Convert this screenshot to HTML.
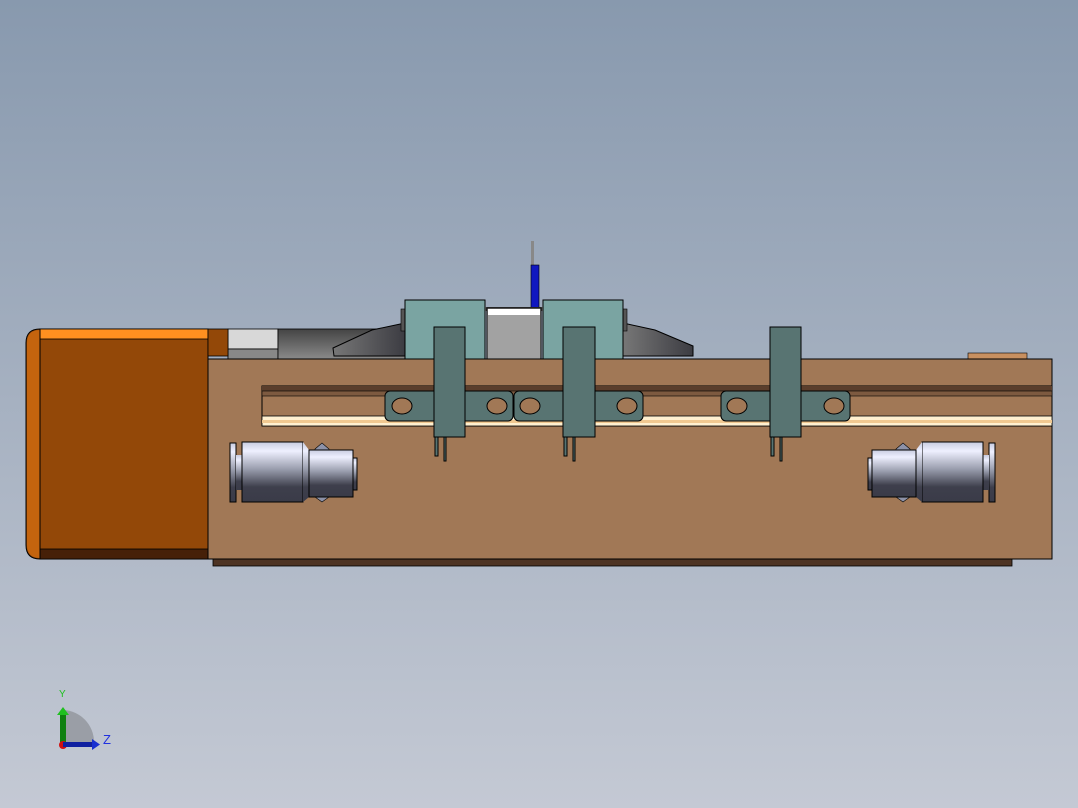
<!DOCTYPE html>
<html><head><style>
html,body{margin:0;padding:0;width:1078px;height:808px;overflow:hidden}
body{background:linear-gradient(#8899ae,#c4c9d4);font-family:"Liberation Sans",sans-serif}
svg{display:block}
</style></head><body>
<svg width="1078" height="808" viewBox="0 0 1078 808" xmlns="http://www.w3.org/2000/svg">
<defs>
<linearGradient id="cyl" x1="0" y1="0" x2="0" y2="1">
<stop offset="0" stop-color="#c8cce0"/><stop offset="0.15" stop-color="#eef0ff"/><stop offset="0.45" stop-color="#9a9eae"/><stop offset="0.75" stop-color="#3e3f4c"/><stop offset="1" stop-color="#3a3b48"/>
</linearGradient>
<linearGradient id="dk" x1="0" y1="0" x2="0" y2="1">
<stop offset="0" stop-color="#444"/><stop offset="1" stop-color="#8a8a8a"/>
</linearGradient>
<linearGradient id="wg" x1="0" y1="0" x2="1" y2="0">
<stop offset="0" stop-color="#777"/><stop offset="1" stop-color="#3c3c42"/>
</linearGradient>
<g id="cylL" stroke="#000" stroke-width="1">
<rect x="230" y="443" width="6" height="59" fill="url(#cyl)"/>
<rect x="236" y="455" width="6" height="35" fill="url(#cyl)" stroke="none"/>
<polygon points="315,449 322,443 329,449 329,497 322,502 315,497" fill="#8d92a8" stroke-width="0.6"/>
<rect x="242" y="442" width="61" height="60" fill="url(#cyl)"/>
<polygon points="303,442 309,450 309,497 303,502" fill="url(#cyl)" stroke="none"/>
<rect x="309" y="450" width="44" height="47" fill="url(#cyl)"/>
<rect x="353" y="458" width="4" height="32" fill="url(#cyl)"/>
</g>
</defs>
<!-- top back parts -->
<rect x="968" y="353" width="59" height="6" fill="#c89060" stroke="#000" stroke-width="0.6"/>
<rect x="228" y="353" width="40" height="6" fill="#c89060" stroke="#000" stroke-width="0.6"/>
<rect x="228" y="329" width="50" height="20" fill="#d8d8d8" stroke="#000" stroke-width="0.8"/>
<rect x="228" y="349" width="50" height="10" fill="#888" stroke="#000" stroke-width="0.8"/>
<rect x="278" y="329" width="128" height="30" fill="url(#dk)" stroke="#000" stroke-width="0.8"/>
<!-- wings -->
<polygon points="333,348 372,330 405,323 405,356 334,356" fill="url(#wg)" stroke="#000"/>
<polygon points="623,323 655,330 693,346 693,356 623,356" fill="url(#wg)" stroke="#000"/>
<rect x="401" y="309" width="5" height="22" fill="#555" stroke="#000" stroke-width="0.6"/>
<rect x="622" y="309" width="5" height="22" fill="#555" stroke="#000" stroke-width="0.6"/>
<!-- carriage -->
<rect x="531" y="241" width="3" height="24" fill="#888"/>
<rect x="531" y="265" width="8" height="45" fill="#1018c0" stroke="#000" stroke-width="0.6"/>
<rect x="405" y="300" width="80" height="59" fill="#7aa4a2" stroke="#000"/>
<rect x="543" y="300" width="80" height="59" fill="#7aa4a2" stroke="#000"/>
<rect x="485" y="307" width="58" height="4" fill="#444"/>
<path d="M487 308 H541 V360 Q541 363 537 363 H491 Q487 363 487 360 Z" fill="#a2a2a2" stroke="#000"/>
<rect x="488" y="309" width="52" height="6" fill="#fff"/>
<!-- orange block -->
<path d="M40 329 H208 V559 H40 Q26 559 26 545 V343 Q26 329 40 329 Z" fill="#934808" stroke="#000"/>
<path d="M40 330 Q27 330 27 343 V545 Q27 558 40 558 Z" fill="#c4640e"/>
<rect x="40" y="329" width="168" height="10" fill="#ff9020" stroke="#000" stroke-width="0.8"/>
<rect x="40" y="549" width="168" height="10" fill="#462008" stroke="#000" stroke-width="0.8"/>
<line x1="40" y1="329" x2="40" y2="559" stroke="#000"/>
<rect x="208" y="329" width="20" height="27" fill="#934808" stroke="#000" stroke-width="0.8"/>
<!-- body -->
<rect x="213" y="559" width="799" height="7" fill="#4e3424" stroke="#000" stroke-width="0.8"/>
<rect x="208" y="359" width="844" height="200" fill="#a17856" stroke="#000"/>
<!-- rail -->
<rect x="262" y="386" width="790" height="40" fill="#a17856" stroke="#000"/>
<rect x="262" y="386" width="790" height="5" fill="#5a3e2c"/>
<rect x="262" y="391" width="790" height="5" fill="#7d5a40" stroke="#000" stroke-width="0.6"/>
<rect x="262" y="416" width="790" height="10" fill="#fff0d0" stroke="#000" stroke-width="0.8"/>
<rect x="262" y="420" width="790" height="3" fill="#f0c890"/>
<!-- brackets -->
<g fill="#587472" stroke="#000">
<rect x="385" y="391" width="128" height="30" rx="5"/>
<rect x="514" y="391" width="129" height="30" rx="5"/>
<rect x="721" y="391" width="129" height="30" rx="5"/>
</g>
<g fill="#a17856" stroke="#000">
<ellipse cx="402" cy="406" rx="10" ry="8"/><ellipse cx="497" cy="406" rx="10" ry="8"/>
<ellipse cx="530" cy="406" rx="10" ry="8"/><ellipse cx="627" cy="406" rx="10" ry="8"/>
<ellipse cx="737" cy="406" rx="10" ry="8"/><ellipse cx="834" cy="406" rx="10" ry="8"/>
</g>
<!-- vertical plates -->
<g fill="#587472" stroke="#000">
<rect x="434" y="327" width="31" height="110"/><rect x="435" y="437" width="3" height="19"/><rect x="444" y="437" width="2" height="24"/>
<rect x="563" y="327" width="32" height="110"/><rect x="564" y="437" width="3" height="19"/><rect x="573" y="437" width="2" height="24"/>
<rect x="770" y="327" width="31" height="110"/><rect x="771" y="437" width="3" height="19"/><rect x="780" y="437" width="2" height="24"/>
</g>
<!-- cylinders -->
<use href="#cylL"/>
<use href="#cylL" transform="translate(1225,0) scale(-1,1)"/>
<!-- triad -->
<path d="M63 745 V710 A32 32 0 0 1 94 742 Z" fill="#9a9ea6"/>
<rect x="60" y="713" width="6" height="32" fill="#108010"/>
<polygon points="57,715 63,707 69,715" fill="#20c020"/>
<circle cx="63" cy="745" r="4" fill="#d01010"/>
<rect x="63" y="742" width="30" height="5" fill="#1020a0"/>
<polygon points="92,739 100,744.5 92,750" fill="#1830d0"/>
<text x="59" y="697" font-size="10" fill="#20c020">Y</text>
<text x="103" y="744" font-size="13" fill="#2030e0">Z</text>
</svg>
</body></html>
